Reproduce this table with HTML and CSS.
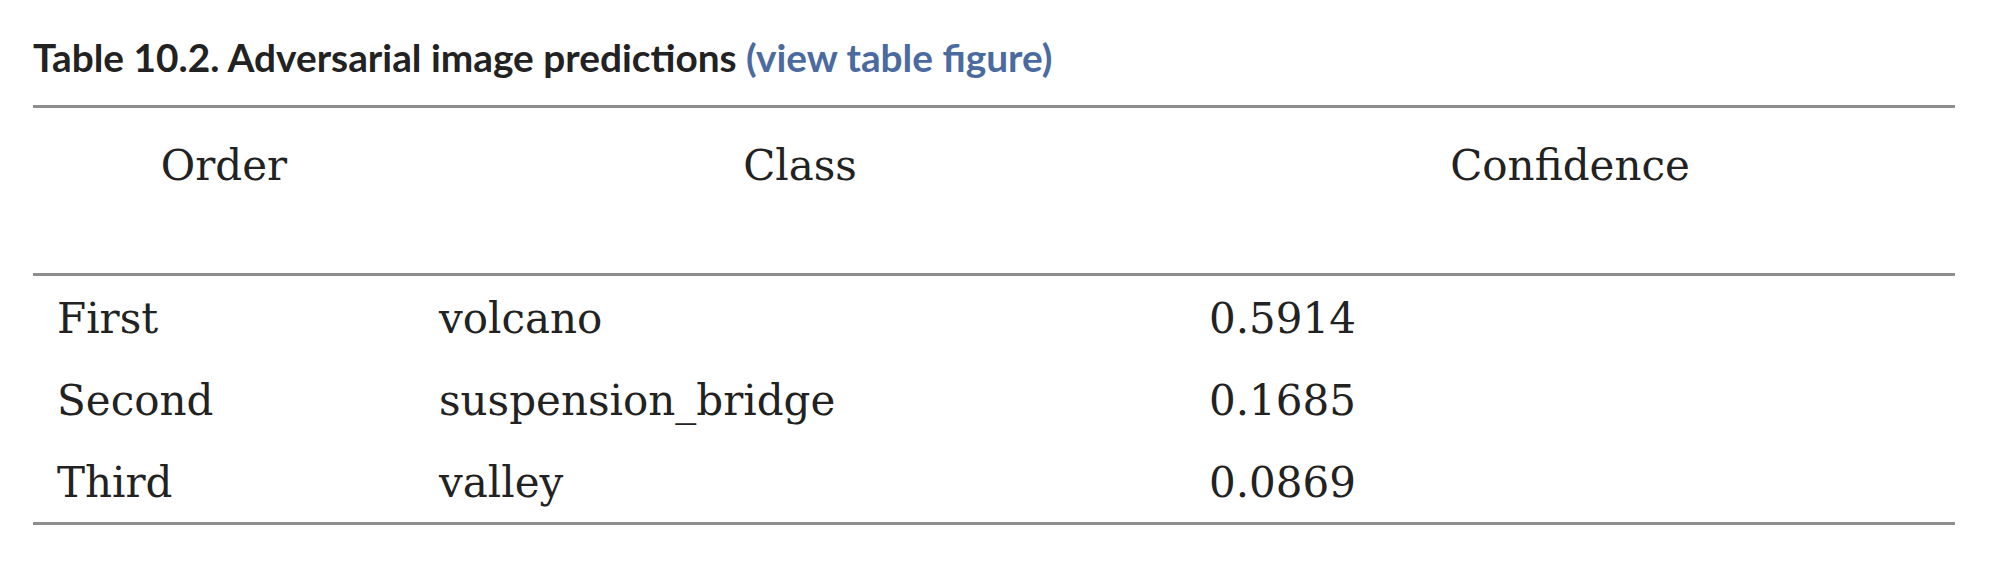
FILE: index.html
```html
<!DOCTYPE html>
<html lang="en">
<head>
<meta charset="utf-8">
<title>Table 10.2</title>
<link rel="stylesheet" href="styles.css">
</head>
<body>
<div class="wrap">
  <h3 class="caption">Table 10.2. Adversarial image predictions <a class="fig-link" href="#">(view table figure)</a></h3>
  <table class="data">
    <colgroup>
      <col class="c1">
      <col class="c2">
      <col class="c3">
    </colgroup>
    <thead>
      <tr><th>Order</th><th>Class</th><th>Confidence</th></tr>
    </thead>
    <tbody>
      <tr><td>First</td><td>volcano</td><td>0.5914</td></tr>
      <tr><td>Second</td><td>suspension_bridge</td><td>0.1685</td></tr>
      <tr><td>Third</td><td>valley</td><td>0.0869</td></tr>
    </tbody>
  </table>
</div>
</body>
</html>
```

FILE: styles.css
```css
html, body {
  margin: 0;
  padding: 0;
  background: #ffffff;
}

.wrap {
  padding: 36px 37px 0 33px;
}

.caption {
  margin: 0 0 26px 0;
  font-family: Lato, "Liberation Sans", sans-serif;
  font-weight: 700;
  font-size: 38.8px;
  line-height: 43px;
  color: #222222;
}

.fig-link {
  color: #4a6aa0;
  text-decoration: none;
}

.data {
  width: 1922px;
  border-collapse: collapse;
  table-layout: fixed;
  font-family: "DejaVu Serif", "Liberation Serif", serif;
  font-size: 42px;
  color: #222222;
  border-top: 3px solid #8e8e8e;
  border-bottom: 3px solid #8e8e8e;
}

.c1 { width: 382px; }
.c2 { width: 770px; }
.c3 { width: 770px; }

.data th {
  font-weight: 400;
  text-align: center;
  line-height: 82px;
  padding: 17px 24px 66px;
  border-bottom: 3px solid #8e8e8e;
}

.data td {
  text-align: left;
  line-height: 78px;
  padding: 4px 24px 0;
  height: 78px;
}
```
